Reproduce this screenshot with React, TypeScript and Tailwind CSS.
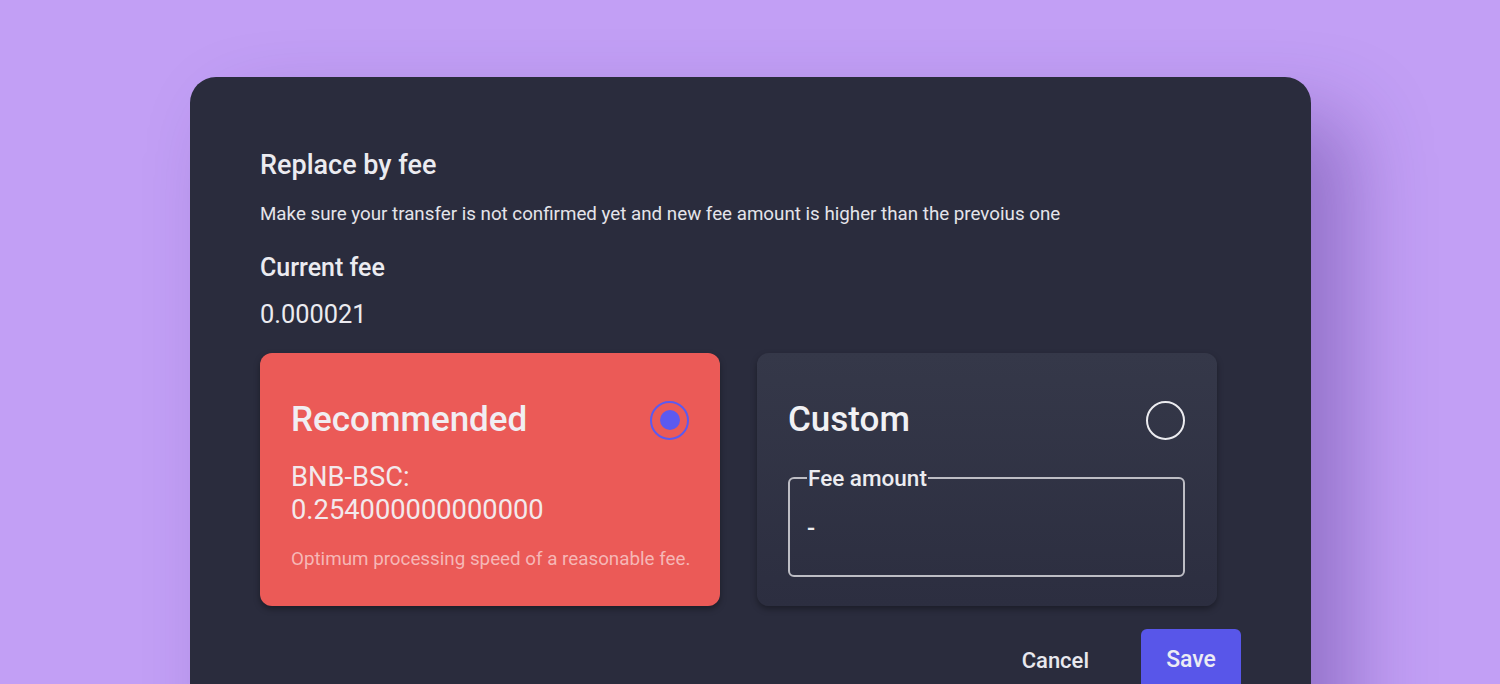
import React from "react";

export default function App() {
  return (
    <div
      className="w-[1500px] h-[684px] overflow-hidden bg-[#c29ff5] relative"
      style={{ fontFamily: "Roboto, 'Noto Sans', sans-serif" }}
    >
      <div className="absolute left-[190px] top-[77px] w-[1121px] h-[700px] rounded-[26px] bg-[#2a2c3d] shadow-[40px_40px_80px_rgba(60,30,120,0.35)] px-[70px] pt-[72px] text-[#ebebf0]">
        <div className="text-[27px] font-medium leading-[32px]">Replace by fee</div>
        <div className="mt-[21px] text-[18.75px] leading-[24px] text-[#e4e4ea]">
          Make sure your transfer is not confirmed yet and new fee amount is higher than the prevoius one
        </div>
        <div className="mt-[27px] text-[25px] font-medium leading-[30px]">Current fee</div>
        <div className="mt-[16px] text-[25.4px] leading-[30px]">0.000021</div>
        <div className="mt-[24px] flex gap-[37px] w-[957px]">
          <div className="w-[460px] h-[253px] rounded-[12px] bg-[#eb5a57] shadow-[0_3px_6px_rgba(0,0,0,0.35)] px-[31px] pt-[47px]">
            <div className="flex items-center justify-between">
              <div className="text-[35px] font-medium leading-[40px] text-[#f1eef2]">Recommended</div>
              <div className="w-[39px] h-[39px] rounded-full border-2 border-[#5b5af0] flex items-center justify-center">
                <div className="w-[20px] h-[20px] rounded-full bg-[#5b5af0]" />
              </div>
            </div>
            <div className="mt-[21px] text-[27.3px] leading-[33px] text-[#f3e9ec]">
              BNB-BSC:
              <br />
              0.254000000000000
            </div>
            <div className="mt-[20px] text-[18.8px] leading-[24px] text-[#f6b7b6] whitespace-nowrap">
              Optimum processing speed of a reasonable fee.
            </div>
          </div>
          <div className="w-[460px] h-[253px] rounded-[12px] bg-gradient-to-b from-[#353849] to-[#2c2e40] shadow-[0_3px_6px_rgba(0,0,0,0.35)] pl-[31px] pr-[32px] pt-[47px]">
            <div className="flex items-center justify-between">
              <div className="text-[35px] font-medium leading-[40px] text-[#f1f1f4]">Custom</div>
              <div className="w-[39px] h-[39px] rounded-full border-2 border-[#ececf0]" />
            </div>
            <fieldset className="mt-[26px] h-[111px] rounded-[6px] border-2 border-[#bdbdc4] px-[17px]">
              <legend className="px-[1px] text-[22.5px] font-medium leading-[24px] text-[#ececf0]">Fee amount</legend>
              <div className="pt-[24px] text-[24px] font-medium leading-[28px] text-[#ececf0]">-</div>
            </fieldset>
          </div>
        </div>
        <div className="mt-[23px] flex justify-end items-start gap-[52px]">
          <div className="pt-[18px] text-[22px] leading-[28px] font-medium text-[#e8e8ee]">Cancel</div>
          <div className="w-[100px] h-[64px] rounded-[6px] bg-[#5856e9] flex justify-center pt-[17px] text-[23px] leading-[28px] font-medium text-[#ececf4]">
            Save
          </div>
        </div>
      </div>
    </div>
  );
}
